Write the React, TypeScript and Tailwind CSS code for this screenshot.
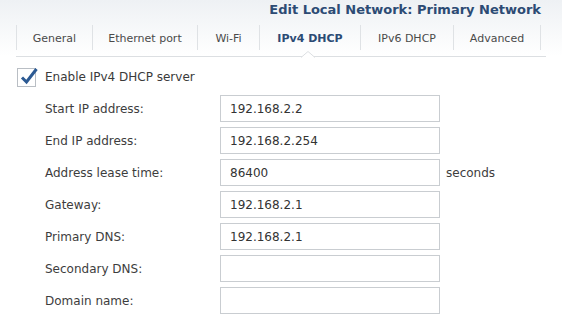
import React from 'react';

const tabs = [
    { label: 'General', w: 76 },
    { label: 'Ethernet port', w: 105 },
    { label: 'Wi-Fi', w: 62 },
    { label: 'IPv4 DHCP', w: 101, active: true },
    { label: 'IPv6 DHCP', w: 93 },
    { label: 'Advanced', w: 88 },
];

const fields = [
    { label: 'Start IP address:', value: '192.168.2.2' },
    { label: 'End IP address:', value: '192.168.2.254' },
    { label: 'Address lease time:', value: '86400', suffix: 'seconds' },
    { label: 'Gateway:', value: '192.168.2.1' },
    { label: 'Primary DNS:', value: '192.168.2.1' },
    { label: 'Secondary DNS:', value: '' },
    { label: 'Domain name:', value: '' },
];

const CheckMark = () => (
    <div className="relative w-[19px] h-[19px] border border-[#b9bec4] bg-white">
        <svg className="absolute left-[2px] top-[-3px]" width="20" height="20" viewBox="0 0 20 20">
            <path d="M2 11.5 L6.5 16 L16.5 3" fill="none" stroke="#2c5a93" strokeWidth="3" strokeLinejoin="miter" />
        </svg>
    </div>
);

export default function App() {
    return (
        <div
            className="w-[562px] h-[318px] overflow-hidden bg-white text-[12px] text-[#3d3d3d]"
            style={{ fontFamily: '"DejaVu Sans", sans-serif' }}
        >
            <div className="bg-gradient-to-b from-[#eef1f4] to-white h-[56px]">
                <div className="flex justify-end pr-[21px] pt-[2px] h-[23px]">
                    <h1 className="text-[13px] font-bold text-[#2c4b74] leading-[16px]">Edit Local Network: Primary Network</h1>
                </div>
                <div className="flex pl-[16px] mt-[2px] h-[25px] text-[11px]">
                    {tabs.map((t, i) => (
                        <div
                            key={t.label}
                            style={{ width: t.w }}
                            className={`flex items-center justify-center pt-[3px] border-l border-[#dfe2e5] ${i === tabs.length - 1 ? 'border-r' : ''} ${t.active ? 'font-bold text-[#2c4b74]' : 'text-[#4a4a4a]'}`}
                        >
                            {t.label}
                        </div>
                    ))}
                </div>
            </div>
            <div className="relative ml-[16px] w-[530px] border-t border-[#dcdfe2]">
                <svg className="absolute left-[285px] top-[-6px]" width="14" height="7" viewBox="0 0 14 7">
                    <path d="M0 6.5 L7 0.5 L14 6.5" fill="white" stroke="#dcdfe2" strokeWidth="1" />
                </svg>
            </div>
            <div className="pl-[17px] pt-[10px]">
                <div className="flex items-center gap-[9px] h-[20px]">
                    <CheckMark />
                    <span className="text-[#3a3a3a]">Enable IPv4 DHCP server</span>
                </div>
                <div className="flex flex-col gap-[5px] mt-[8px] pl-[28px]">
                    {fields.map(f => (
                        <div key={f.label} className="flex items-center h-[27px]">
                            <span className="w-[175px] shrink-0">{f.label}</span>
                            <div className="w-[220px] h-[27px] border border-[#c9cdd1] bg-white px-[9px] flex items-center text-[#333]">
                                {f.value}
                            </div>
                            {f.suffix && <span className="ml-[6px]">{f.suffix}</span>}
                        </div>
                    ))}
                </div>
            </div>
        </div>
    );
}
